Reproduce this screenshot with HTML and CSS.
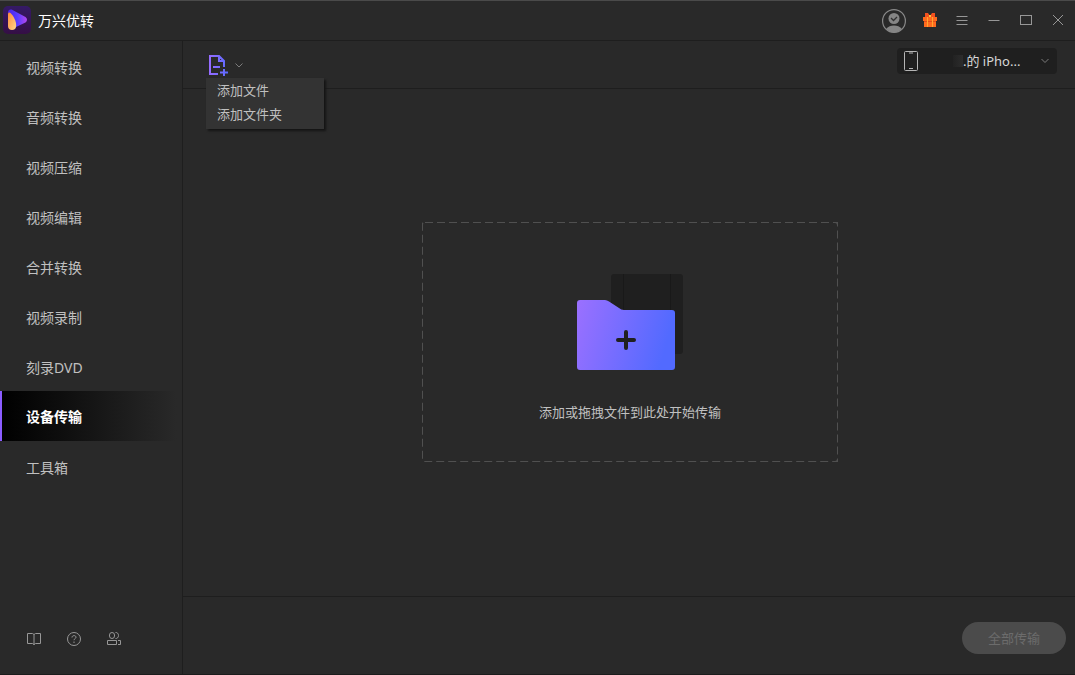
FILE: index.html
```html
<!DOCTYPE html>
<html lang="zh-CN">
<head>
<meta charset="utf-8">
<title>万兴优转</title>
<link rel="stylesheet" href="styles.css">
</head>
<body>
<div class="app">
  <header class="titlebar">
    <svg class="logo" width="28" height="28" viewBox="0 0 28 28" aria-hidden="true">
      <defs>
        <linearGradient id="logo-bg" x1="0" y1="0" x2="0" y2="1"><stop offset="0" stop-color="#351a66"/><stop offset="1" stop-color="#350f45"/></linearGradient>
        <linearGradient id="logo-play" x1="0" y1="0" x2="1" y2="0"><stop offset="0" stop-color="#4a20e8"/><stop offset=".5" stop-color="#5a3cff"/><stop offset="1" stop-color="#b448f0"/></linearGradient>
        <linearGradient id="logo-drop" x1="0" y1="0" x2="1" y2="1"><stop offset="0" stop-color="#ff8a3c"/><stop offset="1" stop-color="#ffd98a"/></linearGradient>
      </defs>
      <rect width="28" height="28" rx="5" fill="url(#logo-bg)"/>
      <path d="M5 6.500C5 4 7 3 9.500 4L22.500 11C24.500 12.500 24.500 15 22.500 16.500L12 21.500Z" fill="url(#logo-play)"/>
      <path d="M5 8C5 6.500 6.500 6 7.500 7C10.500 10 13.200 15 13.200 19.500C13.200 22.500 11.500 24 9 24C6.500 24 5 22.500 5 20Z" fill="url(#logo-drop)"/>
    </svg>
    <h1 class="title">万兴优转</h1>
    <div class="window-tools">
      <button class="icon-button" aria-label="账户">
        <svg width="24" height="24" viewBox="0 0 24 24" fill="none">
          <circle cx="12" cy="12" r="11.400" stroke="#898989" stroke-width="1.200"/>
          <circle cx="12" cy="9.500" r="5.500" fill="#858585"/>
          <path d="M4 20C6 17.500 9 16.500 12 16.500S18 17.500 20 20C17.500 22.500 15 23.400 12 23.400S6.500 22.500 4 20Z" fill="#858585"/>
          <path d="M9 9L11.500 11.500L15 8" stroke="#303030" stroke-width="1.300"/>
        </svg>
      </button>
      <button class="icon-button" aria-label="礼物">
        <svg width="16" height="16" viewBox="0 0 16 16">
          <path d="M3 0H6L8 3L10 0H13V5H3Z" fill="#f4511e"/>
          <path d="M1 4H15V8H1ZM2 8H14V14H2Z" fill="#ff6a1f"/>
          <path d="M2 8.500H14" stroke="#e04e1a"/>
          <path d="M5.500 4V14M10.500 4V14" stroke="#ffa52e"/>
          <path d="M7 2H9V4H7Z" fill="#ffc53d"/>
        </svg>
      </button>
      <button class="icon-button" aria-label="菜单"><svg width="16" height="16" viewBox="0 0 16 16"><path d="M2.500 3.500H13.500M2.500 7.500H13.500M2.500 11.500H13.500" class="line"/></svg></button>
      <button class="icon-button" aria-label="最小化"><svg width="16" height="16" viewBox="0 0 16 16"><path d="M2.500 7.500H13.500" class="line"/></svg></button>
      <button class="icon-button" aria-label="最大化"><svg width="16" height="16" viewBox="0 0 16 16"><rect x="2.500" y="2.500" width="11" height="9" class="line"/></svg></button>
      <button class="icon-button" aria-label="关闭"><svg width="16" height="16" viewBox="0 0 16 16"><path d="M3 2L13 12M13 2L3 12" class="line"/></svg></button>
    </div>
  </header>

  <div class="body">
    <aside class="sidebar">
      <nav class="nav">
        <a class="nav-item" href="#video">视频转换</a>
        <a class="nav-item" href="#audio">音频转换</a>
        <a class="nav-item" href="#compress">视频压缩</a>
        <a class="nav-item" href="#edit">视频编辑</a>
        <a class="nav-item" href="#merge">合并转换</a>
        <a class="nav-item" href="#record">视频录制</a>
        <a class="nav-item" href="#dvd">刻录DVD</a>
        <a class="nav-item nav-item-active" href="#transfer" aria-current="page">设备传输</a>
        <a class="nav-item" href="#toolbox">工具箱</a>
      </nav>
      <div class="side-tools">
        <button class="icon-button" aria-label="教程"><svg width="16" height="16" viewBox="0 0 16 16"><path d="M1.500 2.500H6.500L8 3.500L9.500 2.500H14.500V12.500H9.500L8 13.500L6.500 12.500H1.500ZM8 3.500V14" class="line"/></svg></button>
        <button class="icon-button" aria-label="帮助"><svg width="16" height="16" viewBox="0 0 16 16"><circle cx="8" cy="8" r="6.500" class="line"/><path d="M6 6.500C6 4 10 4 10 6.300C10 7.500 8 7.700 8 9.200M8 10.500V12" class="line"/></svg></button>
        <button class="icon-button" aria-label="社区"><svg width="16" height="16" viewBox="0 0 16 16"><rect x="3.500" y="1.500" width="5" height="6" rx="2.500" class="line"/><path d="M9.500 1.500C13.500 1 13.500 8 9.500 7.500M1.500 13.500V9.500H10.500V13.500ZM12 9.500H14.500V13.500H12" class="line"/></svg></button>
      </div>
    </aside>

    <main class="main">
      <div class="toolbar">
        <div class="add">
          <button class="add-button" aria-label="添加" aria-expanded="true">
            <svg width="20" height="22" viewBox="0 0 20 22" fill="none">
              <defs><linearGradient id="add-color" gradientUnits="userSpaceOnUse" x1="0" y1="0" x2="20" y2="0"><stop offset="0" stop-color="#9a6cff"/><stop offset="1" stop-color="#5b6aff"/></linearGradient></defs>
              <path d="M10 20H2V2H11L16 7V13M11 2V7H16M5 13H12M16 15V22M12 18.500H20" stroke="url(#add-color)" stroke-width="2"/>
            </svg>
            <svg width="8" height="6" viewBox="0 0 8 6"><path d="M.5 1.500L4 5L7.500 1.500" class="line"/></svg>
          </button>
          <div class="add-menu" role="menu">
            <button class="add-menu-item" role="menuitem">添加文件</button>
            <button class="add-menu-item" role="menuitem">添加文件夹</button>
          </div>
        </div>
        <div class="device">
          <svg class="device-phone" width="14" height="20" viewBox="0 0 14 20" aria-hidden="true"><rect x=".5" y=".5" width="13" height="19" rx="1" fill="none" stroke="#b5b5b5"/><path d="M5 2H9M5 17.500H9" stroke="#b5b5b5"/></svg>
          <span class="device-mask"></span>
          <select class="device-select" aria-label="设备"><option>.的 iPho...</option></select>
          <svg class="device-arrow" width="8" height="6" viewBox="0 0 8 6" aria-hidden="true"><path d="M.5 1L4 4.500L7.500 1" class="line"/></svg>
        </div>
      </div>

      <section class="stage">
        <div class="dropzone">
          <svg class="dropzone-outline" width="100%" height="100%" aria-hidden="true"><rect width="100%" height="100%" rx="3"/></svg>
          <svg width="106" height="96" viewBox="0 0 106 96" aria-hidden="true">
            <defs><linearGradient id="folder-color" x1="0" y1="0" x2="1" y2=".2"><stop offset="0" stop-color="#9b70ff"/><stop offset="1" stop-color="#526aff"/></linearGradient></defs>
            <rect x="34" width="72" height="80" rx="3" fill="#1f1f1f"/>
            <path d="M46.500 0V80M93.500 0V80" stroke="#191919"/>
            <path d="M3 26H28Q30 26 32 27.500L42 34Q44 36 47 36H95Q98 36 98 39V93Q98 96 95 96H3Q0 96 0 93V29Q0 26 3 26Z" fill="url(#folder-color)"/>
            <path d="M49 58V74M41 66H57" stroke="#202020" stroke-width="4" stroke-linecap="round"/>
          </svg>
          <p class="dropzone-text">添加或拖拽文件到此处开始传输</p>
        </div>
      </section>

      <footer class="footer">
        <button class="transfer-all" disabled>全部传输</button>
      </footer>
    </main>
  </div>
</div>
</body>
</html>
```
FILE: styles.css
```css
* {
  box-sizing: border-box;
}

body {
  margin: 0;
  background: #292929;
  color: #c0c0c0;
  font-family: "Noto Sans", "Noto Sans CJK SC", sans-serif;
  font-size: 14px;
}

button {
  padding: 0;
  border: 0;
  background: none;
  color: inherit;
  font: inherit;
}

svg {
  display: block;
}

.line {
  fill: none;
  stroke: #979797;
}

.app {
  display: flex;
  flex-direction: column;
  min-height: 100vh;
  border-top: 1px solid #4a4a4a;
  border-bottom: 1px solid #1c1c1c;
}

.titlebar {
  display: flex;
  align-items: center;
  gap: 7px;
  height: 40px;
  padding: 0 9px 0 3px;
  border-bottom: 1px solid #1e1e1e;
}

.logo {
  margin-bottom: 1px;
}

.title {
  margin: 0;
  color: #fff;
  font-size: 14px;
  font-weight: 400;
  line-height: 20px;
}

.window-tools {
  display: flex;
  align-items: center;
  gap: 16px;
  margin-left: auto;
}

.icon-button {
  display: block;
}

.body {
  display: flex;
  flex: 1;
}

.sidebar {
  display: flex;
  flex-direction: column;
  justify-content: space-between;
  width: 183px;
  border-right: 1px solid #1e1e1e;
}

.nav {
  display: flex;
  flex-direction: column;
}

.nav-item {
  height: 50px;
  padding: 3px 0 0 24px;
  border-left: 2px solid transparent;
  color: #c0c0c0;
  line-height: 47px;
  text-decoration: none;
}

.nav-item-active {
  padding-top: 2px;
  border-left-color: #8b5cff;
  background: linear-gradient(90deg, #000, #292929 97%);
  color: #fff;
  font-weight: 700;
}

.side-tools {
  display: flex;
  gap: 24px;
  padding: 0 26px 27px;
}

.main {
  display: flex;
  flex: 1;
  flex-direction: column;
}

.toolbar {
  display: flex;
  align-items: center;
  justify-content: space-between;
  height: 48px;
  padding: 0 18px 0 23px;
  border-bottom: 1px solid #1e1e1e;
}

.add {
  position: relative;
  padding: 2px;
}

.add-button {
  display: flex;
  align-items: center;
  gap: 7px;
}

.add-button .line,
.device-arrow .line {
  stroke: #7c7c7c;
}

.add-menu {
  position: absolute;
  top: 100%;
  left: 0;
  z-index: 1;
  width: 118px;
  padding: 0 0 3px;
  background: #333;
  box-shadow: 2px 2px 2px #151515;
}

.add-menu-item {
  display: block;
  width: 100%;
  padding-left: 11px;
  font-size: 13px;
  line-height: 24px;
  text-align: left;
}

.device {
  display: flex;
  align-items: center;
  width: 160px;
  height: 26px;
  margin-bottom: 7px;
  padding: 0 8px 0 7px;
  border-radius: 4px;
  background: #1f1f1f;
}

.device-mask {
  width: 10px;
  height: 12px;
  margin-left: 35px;
  background: linear-gradient(90deg, #222, #2c2c2c);
}

.device-select {
  flex: 1;
  min-width: 0;
  padding: 0;
  border: 0;
  appearance: none;
  background: none;
  color: #d8d8d8;
  font: inherit;
  font-size: 13px;
}

.stage {
  display: grid;
  flex: 1;
  place-items: center;
  padding: 0 0 2px 2px;
}

.dropzone {
  position: relative;
  display: flex;
  flex-direction: column;
  align-items: center;
  gap: 32px;
  width: 416px;
  max-width: 100%;
  padding: 52px 16px 40px;
}

.dropzone-outline {
  position: absolute;
  inset: 0;
}

.dropzone-outline rect {
  fill: none;
  stroke: #505050;
  stroke-width: 2px;
  stroke-dasharray: 8 4;
}

.dropzone-text {
  margin: 0;
  font-size: 13px;
  line-height: 20px;
}

.footer {
  display: flex;
  align-items: center;
  justify-content: flex-end;
  height: 78px;
  padding: 4px 9px 0;
  border-top: 1px solid #1e1e1e;
}

.transfer-all {
  width: 104px;
  height: 32px;
  border-radius: 16px;
  background: #4b4b4b;
  color: #6c6c6c;
  font-size: 13px;
}
```
